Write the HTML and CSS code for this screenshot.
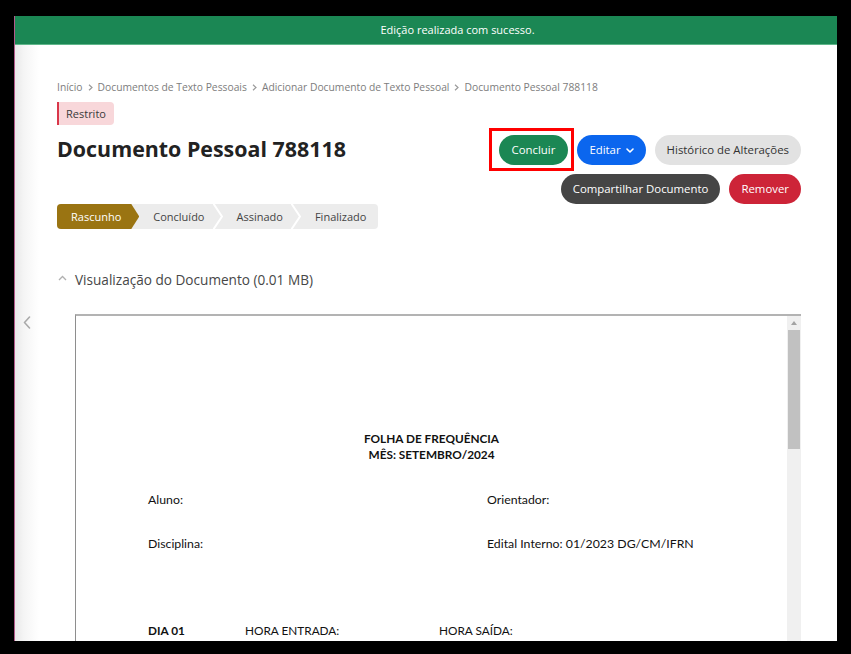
FILE: index.html
```html
<!DOCTYPE html>
<html lang="pt-BR">
<head>
<meta charset="utf-8">
<title>Documento Pessoal 788118</title>
<link rel="stylesheet" href="styles.css">
</head>
<body>
<div class="screen">
  <div class="page">
    <div class="alert">Edição realizada com sucesso.</div>
    <button class="side-toggle" aria-label="Recolher menu">
      <svg width="8" height="13" viewBox="0 0 8 13"><polyline points="6.5,1 1.5,6.5 6.5,12" fill="none" stroke="#a9a9a9" stroke-width="1.6" stroke-linecap="round" stroke-linejoin="round"/></svg>
    </button>
    <main class="content">
      <nav class="breadcrumb">
        <span>Início</span>
        <svg class="crumb-sep" width="5" height="7" viewBox="0 0 5 7"><polyline points="1,0.8 4,3.5 1,6.2" fill="none" stroke="#9a9a9a" stroke-width="1.2"/></svg>
        <span>Documentos de Texto Pessoais</span>
        <svg class="crumb-sep" width="5" height="7" viewBox="0 0 5 7"><polyline points="1,0.8 4,3.5 1,6.2" fill="none" stroke="#9a9a9a" stroke-width="1.2"/></svg>
        <span>Adicionar Documento de Texto Pessoal</span>
        <svg class="crumb-sep" width="5" height="7" viewBox="0 0 5 7"><polyline points="1,0.8 4,3.5 1,6.2" fill="none" stroke="#9a9a9a" stroke-width="1.2"/></svg>
        <span>Documento Pessoal 788118</span>
      </nav>
      <div class="badge-row"><span class="badge">Restrito</span></div>
      <div class="header">
        <h1 class="title">Documento Pessoal 788118</h1>
        <div class="actions">
          <div class="action-row">
            <span class="btn btn-success btn-highlight">Concluir</span>
            <span class="btn btn-primary">Editar
              <svg class="caret" width="8" height="5" viewBox="0 0 8 5"><polyline points="1,1 4,4 7,1" fill="none" stroke="#fff" stroke-width="1.6" stroke-linecap="round" stroke-linejoin="round"/></svg>
            </span>
            <span class="btn btn-light">Histórico de Alterações</span>
          </div>
          <div class="action-row">
            <span class="btn btn-dark">Compartilhar Documento</span>
            <span class="btn btn-danger">Remover</span>
          </div>
        </div>
      </div>
      <ol class="steps">
        <li class="step step-active">Rascunho</li>
        <li class="step">Concluído<svg class="step-sep" width="10" height="25" viewBox="0 0 10 25"><polyline points="0,-1 9,12.5 0,26" fill="none" stroke="#fff" stroke-width="2"/></svg></li>
        <li class="step">Assinado<svg class="step-sep" width="10" height="25" viewBox="0 0 10 25"><polyline points="0,-1 9,12.5 0,26" fill="none" stroke="#fff" stroke-width="2"/></svg></li>
        <li class="step step-last">Finalizado</li>
      </ol>
      <h2 class="section-title">
        <svg class="section-caret" width="9" height="6" viewBox="0 0 9 6"><polyline points="1,5 4.5,1.5 8,5" fill="none" stroke="#b0b0b0" stroke-width="1.3"/></svg>
        Visualização do Documento (0.01 MB)
      </h2>
      <div class="doc">
        <div class="doc-page">
          <div class="doc-title">FOLHA DE FREQUÊNCIA</div>
          <div class="doc-title">MÊS: SETEMBRO/2024</div>
          <div class="doc-info">
            <span>Aluno:</span><span>Orientador:</span>
            <span>Disciplina:</span><span>Edital Interno: 01/2023 DG/CM/IFRN</span>
          </div>
          <div class="doc-day">
            <span class="doc-bold">DIA 01</span><span>HORA ENTRADA:</span><span>HORA SAÍDA:</span>
          </div>
        </div>
        <div class="scrollbar">
          <span class="scroll-arrow"></span>
          <span class="scroll-thumb"></span>
        </div>
      </div>
    </main>
  </div>
</div>
</body>
</html>
```

FILE: styles.css
```css
html, body {
  margin: 0;
  padding: 0;
}

body {
  background: #000;
  font-family: "Open Sans", "Liberation Sans", sans-serif;
}

.screen {
  width: 851px;
  height: 654px;
  box-sizing: border-box;
  padding: 16px 14px 13px 14px;
}

.page {
  position: relative;
  height: 625px;
  border-left: 1px solid #b25a8c;
  background: linear-gradient(to right, #e9e9e9 0, #f5f5f5 9px, #fff 24px);
  overflow: hidden;
  display: flex;
  flex-direction: column;
}

.alert {
  flex: none;
  height: 28px;
  line-height: 28px;
  background: #1b8754;
  border-bottom: 1px solid #5fb68a;
  color: #fff;
  font-size: 11px;
  text-align: center;
  padding-left: 63px;
}

.side-toggle {
  position: absolute;
  left: 6px;
  top: 298px;
  width: 12px;
  height: 16px;
  padding: 0;
  border: 0;
  background: transparent;
  display: flex;
  align-items: center;
  justify-content: center;
}

.content {
  padding: 34px 36px 0 42px;
}

.breadcrumb {
  display: flex;
  align-items: center;
  height: 16px;
  font-size: 10.3px;
  color: #7d7d7d;
}

.crumb-sep {
  margin: 0 5px;
}

.badge-row {
  margin-top: 7px;
  display: flex;
}

.badge {
  height: 23px;
  line-height: 23px;
  padding: 0 8px 0 7px;
  background: #f8d7da;
  border-left: 2px solid #d9374a;
  border-radius: 0 4px 4px 0;
  color: #3a3a3a;
  font-size: 11px;
}

.header {
  margin-top: 10px;
  display: flex;
  justify-content: space-between;
  align-items: flex-start;
}

.title {
  margin: 0;
  font-size: 21.4px;
  line-height: 28px;
  font-weight: 700;
  color: #222;
}

.actions {
  display: flex;
  flex-direction: column;
  gap: 9px;
}

.action-row {
  display: flex;
  justify-content: flex-end;
  gap: 9px;
}

.btn {
  height: 30px;
  line-height: 30px;
  padding: 0 13px;
  border-radius: 15px;
  font-size: 11.4px;
  display: inline-flex;
  align-items: center;
  gap: 5px;
  white-space: nowrap;
}

.btn-success { background: #1b8754; color: #fff; }
.btn-primary { background: #0b66ee; color: #fff; padding: 0 12px; }
.btn-light { background: #e2e2e2; color: #333; padding: 0 12px; }
.btn-dark { background: #454545; color: #fff; padding: 0 12px; }
.btn-danger { background: #cd2438; color: #fff; padding: 0 12px; }

.btn-highlight {
  position: relative;
}

.btn-highlight::after {
  content: "";
  position: absolute;
  top: -7px;
  left: -10px;
  right: -6px;
  bottom: -6px;
  border: 3px solid #ff0000;
}

.steps {
  list-style: none;
  margin: 0;
  padding: 0;
  display: flex;
  width: fit-content;
  height: 25px;
  background: #ececec;
  border-radius: 4px;
  overflow: hidden;
  font-size: 11px;
  color: #444;
}

.step {
  display: flex;
  align-items: center;
  padding-left: 14px;
  line-height: 25px;
}

.step-sep {
  margin-left: 8px;
}

.step-active {
  background: #9a7412;
  color: #fff;
  padding: 0 18px 0 14px;
  clip-path: polygon(0 0, calc(100% - 8px) 0, 100% 50%, calc(100% - 8px) 100%, 0 100%);
}

.step-last {
  padding-right: 12px;
}

.section-title {
  margin: 40px 0 0 0;
  display: flex;
  align-items: center;
  height: 20px;
  font-size: 13.6px;
  font-weight: 400;
  color: #474747;
}

.section-caret {
  margin: 0 8px 3px 1px;
}

.doc {
  margin: 25px 0 0 18px;
  height: 400px;
  border-top: 2px solid #b3b3b3;
  border-left: 1px solid #8e8e8e;
  display: flex;
  background: #fff;
}

.doc-page {
  flex: 1;
  padding: 115px 0 0 72px;
  font-family: Lato, "Liberation Sans", sans-serif;
  color: #111;
}

.doc-title {
  margin-left: -72px;
  text-align: center;
  font-weight: 700;
  font-size: 11.8px;
  line-height: 16px;
}

.doc-info {
  margin-top: 29px;
  display: grid;
  grid-template-columns: 339px 1fr;
  row-gap: 28px;
  font-size: 12.3px;
  line-height: 16px;
}

.doc-day {
  margin-top: 71px;
  display: grid;
  grid-template-columns: 97px 194px 1fr;
  font-size: 11.8px;
  line-height: 16px;
}

.doc-bold {
  font-weight: 700;
}

.scrollbar {
  flex: none;
  width: 14px;
  background: #f0f0f0;
  display: flex;
  flex-direction: column;
  align-items: center;
}

.scroll-arrow {
  margin-top: 5px;
  width: 0;
  height: 0;
  border-left: 3.5px solid transparent;
  border-right: 3.5px solid transparent;
  border-bottom: 4px solid #a3a3a3;
}

.scroll-thumb {
  margin-top: 5px;
  width: 12px;
  height: 119px;
  background: #c1c1c1;
}
```
